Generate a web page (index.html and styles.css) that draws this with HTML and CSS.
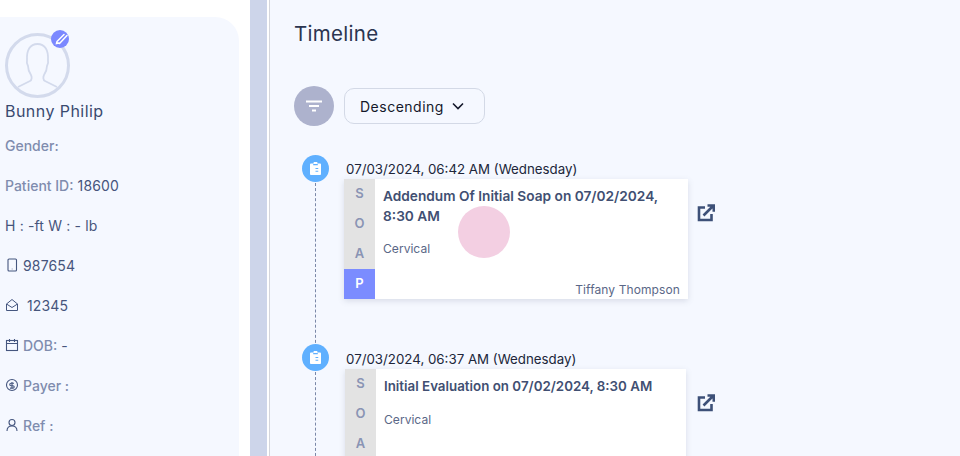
FILE: index.html
```html
<!DOCTYPE html>
<html lang="en">
<head>
<meta charset="utf-8">
<title>Timeline</title>
<link rel="stylesheet" href="styles.css">
</head>
<body>
<div class="page">
  <aside class="sidebar">
    <div class="panel">
      <div class="avatar">
        <svg width="66" height="66" viewBox="0 0 66 66" fill="none" stroke="#d3daec">
          <circle cx="32.500" cy="32.500" r="31" stroke-width="3"/>
          <path d="M13 54 25 48C27 47 27 44 26 42 24 39 23 36 23 33 22 31 21.500 29 22 27 21.500 17 25 11 32.500 11 40 11 43.500 17 43 27 43.500 29 43 31 42 33 42 36 41 39 39 42 38 44 38 47 40 48L52 54" stroke-width="1.800"/>
        </svg>
        <span class="edit-badge">
          <svg width="18" height="18" viewBox="0 0 18 18" fill="none" stroke="#fff" stroke-width="1.500" stroke-linecap="round">
            <path d="M6 11.500 13 4.500M8.500 13.500 16 5.500M6 11.500 5.500 13.500 8 13"/>
          </svg>
        </span>
      </div>
      <h2 class="name">Bunny Philip</h2>
      <ul class="facts">
        <li><span class="muted">Gender:</span></li>
        <li><span class="muted">Patient ID:</span> 18600</li>
        <li>H : -ft W : - lb</li>
        <li>
          <svg class="ico" width="14" height="14" viewBox="0 0 14 14" fill="none" stroke="#45567f" stroke-width="1.100"><rect x="3" y="1" width="8.500" height="12" rx="1"/><path d="M6.800 11h.6"/></svg>
          <span class="gap-s">987654</span>
        </li>
        <li>
          <svg class="ico" width="14" height="14" viewBox="0 0 14 14" fill="none" stroke="#45567f" stroke-width="1"><path d="M1.500 6 7 1.500 12.500 6v6.500h-11zM1.500 6 7 9.500 12.500 6"/></svg>
          <span class="gap-l">12345</span>
        </li>
        <li>
          <svg class="ico" width="14" height="14" viewBox="0 0 14 14" fill="none" stroke="#45567f" stroke-width="1.100"><rect x="1.500" y="2.500" width="11" height="10"/><path d="M1.500 5.500h11M4.500 1v3M9.500 1v3"/></svg>
          <span class="gap-s"><span class="muted">DOB:</span> -</span>
        </li>
        <li>
          <svg class="ico" width="14" height="14" viewBox="0 0 14 14" fill="none" stroke="#45567f" stroke-width="1.100"><circle cx="7" cy="7" r="5.500"/><path d="M9 5.300H6a1 1 0 0 0 0 2.500h2a1 1 0 0 1 0 2.300H5M7 4v6"/></svg>
          <span class="gap-s muted">Payer :</span>
        </li>
        <li>
          <svg class="ico" width="14" height="14" viewBox="0 0 14 14" fill="none" stroke="#45567f" stroke-width="1.100"><circle cx="7" cy="4.500" r="3"/><path d="M2 13c0-3.500 2-5 5-5s5 1.500 5 5"/></svg>
          <span class="gap-s muted">Ref :</span>
        </li>
      </ul>
    </div>
  </aside>
  <div class="band"></div>
  <main class="main">
    <h1 class="title">Timeline</h1>
    <div class="sort-row">
      <span class="sort-ico">
        <svg width="16" height="12" viewBox="0 0 16 12" fill="none" stroke="#fff" stroke-width="2"><path d="M0 1.500h16M3 6h10M6 10.500h4"/></svg>
      </span>
      <button class="sort-btn">Descending
        <svg width="12" height="8" viewBox="0 0 12 8" fill="none" stroke="#14182b" stroke-width="1.600"><path d="M1 1.500 6 6.500 11 1.500"/></svg>
      </button>
    </div>

    <section class="entry entry-first">
      <div class="rail">
        <span class="dot"><svg width="11" height="13" viewBox="0 0 12 14"><path fill="#fff" d="M4 0h4v1.500h3a1 1 0 0 1 1 1V13a1 1 0 0 1-1 1H1a1 1 0 0 1-1-1V2.500a1 1 0 0 1 1-1h3z"/><path fill="#5fb0ff" d="M3.500 2h5v1.500h-5zM6 6.500h3v1H6zM6 9.500h3v1H6z"/></svg></span>
      </div>
      <div class="body">
        <div class="stamp">07/03/2024, 06:42 AM (Wednesday)</div>
        <div class="row">
          <article class="card">
            <div class="soap">
              <span>S</span><span>O</span><span>A</span><span class="on">P</span>
            </div>
            <div class="content">
              <h3 class="note">Addendum Of Initial Soap on 07/02/2024, 8:30 AM</h3>
              <p class="area">Cervical</p>
              <p class="author">Tiffany Thompson</p>
            </div>
          </article>
          <svg class="open" width="18" height="18" viewBox="0 0 18 18" fill="none" stroke="#3d5078" stroke-width="2.600"><path d="M8 3.500H2V16h12.500v-6"/><path d="M6.500 11.500 16 2M10.500 1.500h6.300v6.300" /></svg>
        </div>
      </div>
    </section>

    <section class="entry entry-second">
      <div class="rail">
        <span class="dot"><svg width="11" height="13" viewBox="0 0 12 14"><path fill="#fff" d="M4 0h4v1.500h3a1 1 0 0 1 1 1V13a1 1 0 0 1-1 1H1a1 1 0 0 1-1-1V2.500a1 1 0 0 1 1-1h3z"/><path fill="#5fb0ff" d="M3.500 2h5v1.500h-5zM6 6.500h3v1H6zM6 9.500h3v1H6z"/></svg></span>
      </div>
      <div class="body">
        <div class="stamp">07/03/2024, 06:37 AM (Wednesday)</div>
        <div class="row">
          <article class="card card-narrow">
            <div class="soap">
              <span>S</span><span>O</span><span>A</span>
            </div>
            <div class="content">
              <h3 class="note note-tight">Initial Evaluation on 07/02/2024, 8:30 AM</h3>
              <p class="area">Cervical</p>
            </div>
          </article>
          <svg class="open open-shift" width="18" height="18" viewBox="0 0 18 18" fill="none" stroke="#3d5078" stroke-width="2.600"><path d="M8 3.500H2V16h12.500v-6"/><path d="M6.500 11.500 16 2M10.500 1.500h6.300v6.300" /></svg>
        </div>
      </div>
    </section>
  </main>
  <span class="cursor"></span>
</div>
</body>
</html>
```
FILE: styles.css
```css
* { box-sizing: border-box; }
html, body { margin: 0; height: 100%; }
body { background: #fff; font-family: Inter, "Liberation Sans", sans-serif; overflow: hidden; }
.page { position: relative; display: flex; width: 960px; height: 456px; overflow: hidden; }

.sidebar { flex: 0 0 250px; padding: 17px 11px 0 0; }
.panel { height: 100%; background: #f5f8ff; border-radius: 0 24px 0 0; padding: 16px 0 0 5px; }
.avatar { position: relative; width: 66px; height: 66px; }
.edit-badge { position: absolute; left: 46px; top: -3px; width: 18px; height: 18px; border-radius: 50%; background: #7b88ff; overflow: hidden; display: block; }
.edit-badge svg { display: block; }
.name { margin: 0; font-size: 16px; line-height: 24px; letter-spacing: .45px; font-weight: 400; color: #3a4a70; }
.facts { list-style: none; margin: 2px 0 0; padding: 0; font-size: 14px; letter-spacing: .15px; color: #46557c; }
.facts li { display: flex; align-items: center; height: 40px; white-space: pre; }
.muted { color: #7f8cae; font-weight: 500; letter-spacing: 0; }
.ico { flex: none; }
.gap-s { margin-left: 4px; }
.gap-l { margin-left: 8px; }

.band { flex: 0 0 17px; background: #cdd5ea; }
.main { flex: 1; margin-left: 2px; border-left: 1px solid #d4d6dc; background: #f5f8ff; padding: 0 0 0 24px; min-width: 0; }
.title { margin: 22px 0 0; font-size: 20.500px; line-height: 24px; letter-spacing: .3px; font-weight: 400; color: #2b3550; }

.sort-row { display: flex; align-items: center; gap: 10px; margin-top: 40px; }
.sort-ico { width: 40px; height: 40px; border-radius: 50%; background: #adb2cd; display: flex; align-items: center; justify-content: center; }
.sort-btn { display: flex; align-items: center; gap: 8px; width: 141px; height: 36px; padding: 0 15px; border: 1px solid #d3d9e6; border-radius: 10px; background: #f5f8ff; font: inherit; font-size: 14px; letter-spacing: .5px; color: #14182b; }

.entry { display: flex; }
.entry-first { margin-top: 29px; height: 189px; }
.entry-second .body { padding-top: 1px; }
.rail { position: relative; flex: 0 0 27px; margin-left: 8px; }
.rail::after { content: ""; position: absolute; left: 13px; top: 28px; height: 170px; border-left: 1px dashed #7b88a8; }
.dot { display: flex; align-items: center; justify-content: center; width: 27px; height: 27px; border-radius: 50%; background: #5fb0ff; }
.body { margin-left: 15px; }
.stamp { margin: 5px 0 1px 2px; font-size: 13.300px; line-height: 18px; color: #20263a; white-space: nowrap; }
.row { display: flex; align-items: flex-start; gap: 9px; }
.card { display: flex; width: 344px; height: 120px; background: #fff; box-shadow: 0 2px 6px rgba(90, 100, 130, .18); }
.card-narrow { width: 341px; margin-left: 1px; }
.soap { flex: 0 0 31px; display: flex; flex-direction: column; background: #e3e3e3; }
.soap span { flex: 0 0 30px; display: flex; align-items: center; justify-content: center; padding-bottom: 2px; font-size: 13px; font-weight: 600; color: #8a94b4; }
.soap .on { background: #7b8cff; color: #fff; }
.content { position: relative; flex: 1; padding: 7px 8px 0 8px; }
.note { margin: 0; font-size: 13.700px; line-height: 20px; font-weight: 600; color: #414f72; }
.note-tight { font-size: 13.350px; }
.area { margin: 14px 0 0; font-size: 12.100px; line-height: 18px; color: #5a6787; }
.note-tight + .area { margin-top: 15px; }
.author { position: absolute; right: 8px; bottom: 0; margin: 0; font-size: 12px; line-height: 18px; letter-spacing: .1px; color: #5a6787; }
.open { flex: none; margin-top: 25px; }
.open-shift { margin-left: 2px; }

.cursor { position: absolute; left: 458px; top: 206px; width: 52px; height: 52px; border-radius: 50%; background: #f3cfe2; }
```
